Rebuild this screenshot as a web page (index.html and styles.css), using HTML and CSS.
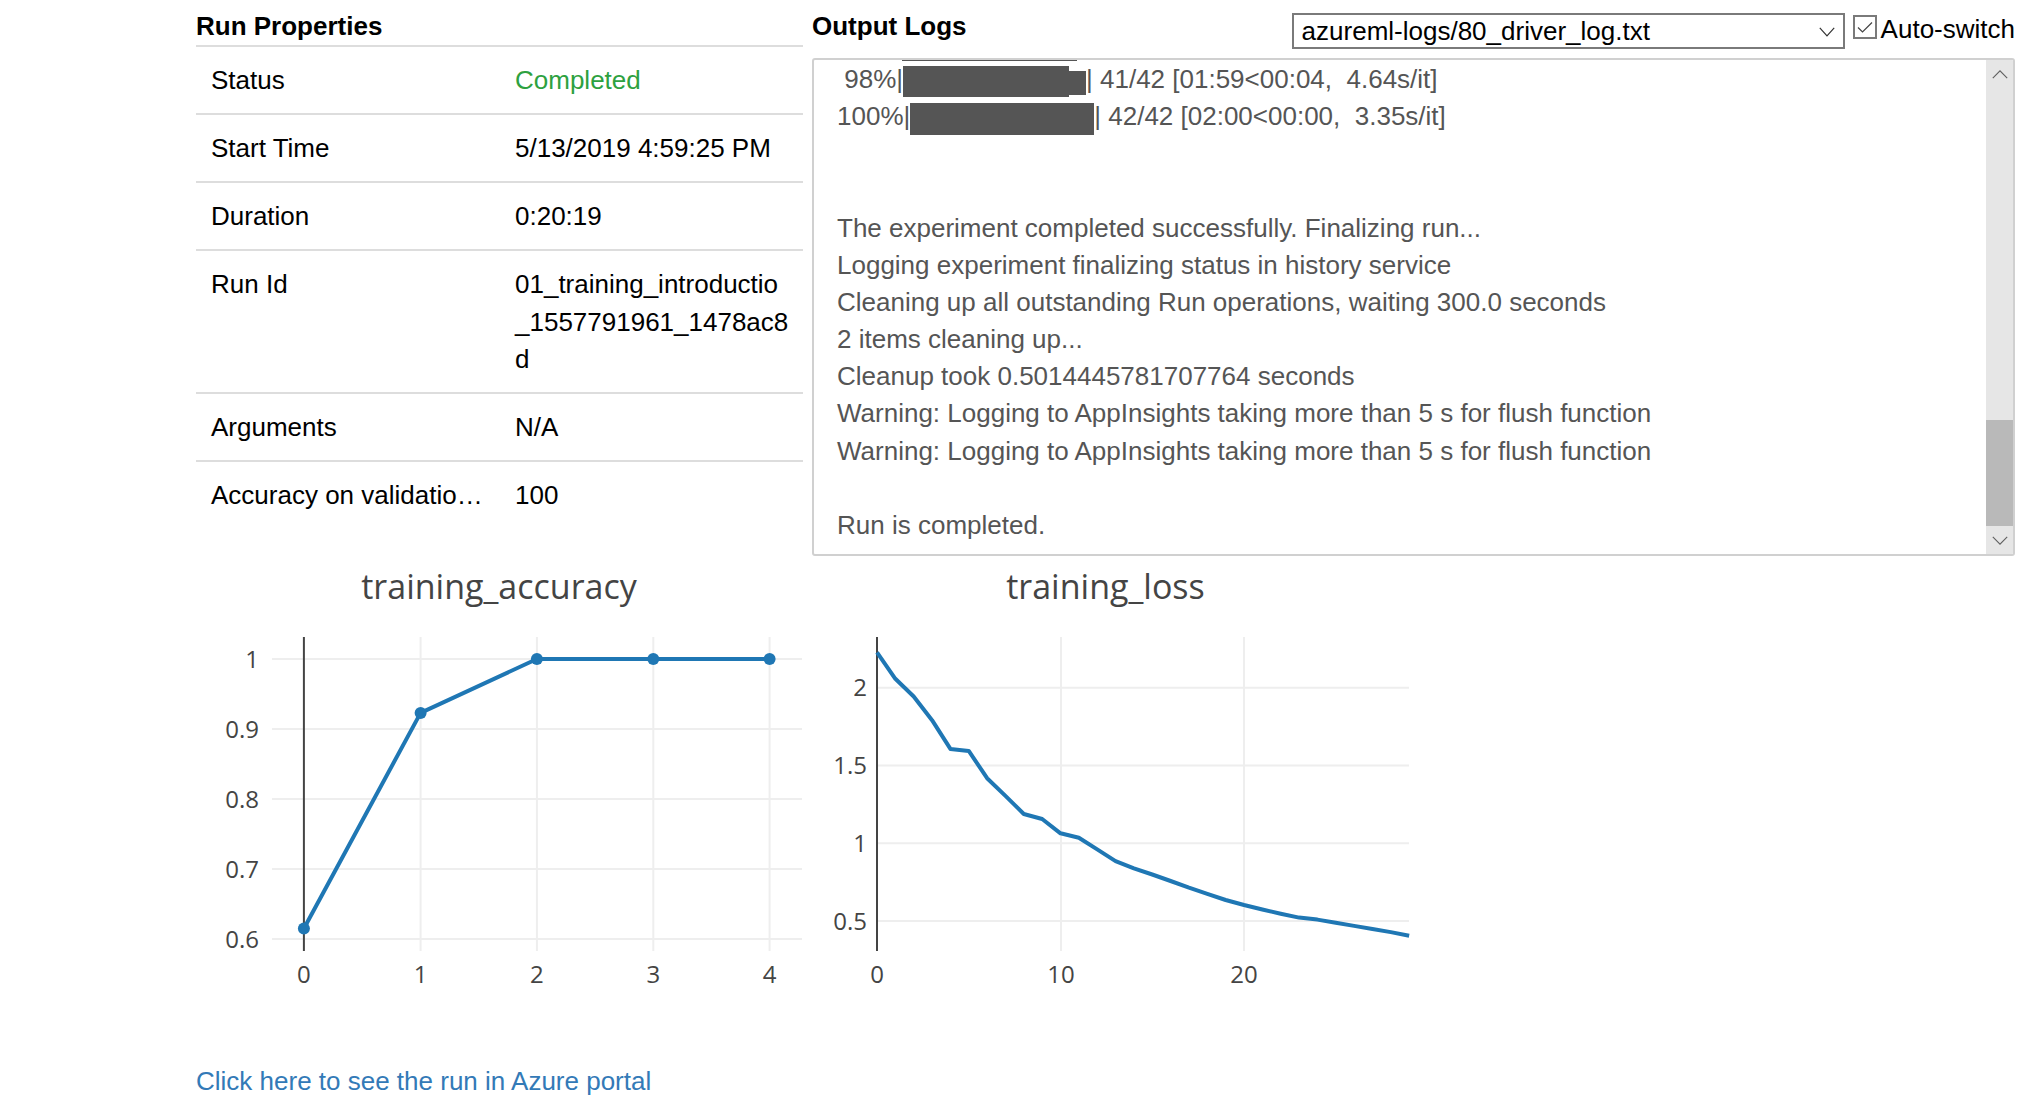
FILE: index.html
```html
<!DOCTYPE html>
<html lang="en">
<head>
<meta charset="utf-8">
<title>Run Details</title>
<link rel="stylesheet" href="styles.css">
</head>
<body>
<div class="page">
  <div class="top">
    <section class="props">
      <h2 class="heading">Run Properties</h2>
      <div class="table">
        <div class="row"><div class="k">Status</div><div class="v ok">Completed</div></div>
        <div class="row"><div class="k">Start Time</div><div class="v">5/13/2019 4:59:25 PM</div></div>
        <div class="row"><div class="k">Duration</div><div class="v">0:20:19</div></div>
        <div class="row"><div class="k">Run Id</div><div class="v">01_training_introductio_1557791961_1478ac8d</div></div>
        <div class="row"><div class="k">Arguments</div><div class="v">N/A</div></div>
        <div class="row"><div class="k">Accuracy on validation accuracy</div><div class="v">100</div></div>
      </div>
    </section>
    <section class="logs">
      <div class="logs-head">
        <h2 class="heading">Output Logs</h2>
        <div class="controls">
          <div class="dropdown">
            <span class="dd-text">azureml-logs/80_driver_log.txt</span>
            <svg class="dd-chev" width="16" height="10" viewBox="0 0 16 10"><polyline points="0.8,0.8 8,8.8 15.2,0.8" fill="none" stroke="#333" stroke-width="1.2"/></svg>
          </div>
          <div class="auto">
            <svg class="cb" width="24" height="24" viewBox="0 0 24 24"><rect x="1" y="1" width="22" height="22" fill="#fff" stroke="#7a7a7a" stroke-width="2"/><polyline points="5,12.5 9.5,17 19,7.5" fill="none" stroke="#444" stroke-width="1.2"/></svg>
            <span class="auto-label">Auto-switch</span>
          </div>
        </div>
      </div>
      <div class="logbox">
        <div class="logtext">
          <div class="peek"></div>
          <div class="ln"> 98%|<span class="bar b95"></span><span class="bar part"></span>| 41/42 [01:59&lt;00:04,  4.64s/it]</div>
          <div class="ln">100%|<span class="bar b100"></span>| 42/42 [02:00&lt;00:00,  3.35s/it]</div>
          <div class="ln blank"></div>
          <div class="ln blank"></div>
          <div class="ln">The experiment completed successfully. Finalizing run...</div>
          <div class="ln">Logging experiment finalizing status in history service</div>
          <div class="ln">Cleaning up all outstanding Run operations, waiting 300.0 seconds</div>
          <div class="ln">2 items cleaning up...</div>
          <div class="ln">Cleanup took 0.5014445781707764 seconds</div>
          <div class="ln">Warning: Logging to AppInsights taking more than 5 s for flush function</div>
          <div class="ln">Warning: Logging to AppInsights taking more than 5 s for flush function</div>
          <div class="ln blank"></div>
          <div class="ln">Run is completed.</div>
        </div>
        <div class="sb">
          <div class="sb-btn"><svg width="16" height="9" viewBox="0 0 16 9"><polyline points="0.8,8.2 8,0.8 15.2,8.2" fill="none" stroke="#606060" stroke-width="1.1"/></svg></div>
          <div class="sb-track"><div class="sb-thumb"></div></div>
          <div class="sb-btn"><svg width="16" height="9" viewBox="0 0 16 9"><polyline points="0.8,0.8 8,8.2 15.2,0.8" fill="none" stroke="#606060" stroke-width="1.1"/></svg></div>
        </div>
      </div>
    </section>
  </div>

  <div class="charts">
    <svg class="chart" width="616" height="470" viewBox="0 0 616 470">
      <text class="title" x="303" y="43">training_accuracy</text>
      <g class="grid">
        <line x1="76" y1="103" x2="606" y2="103"/>
        <line x1="76" y1="173" x2="606" y2="173"/>
        <line x1="76" y1="243" x2="606" y2="243"/>
        <line x1="76" y1="313" x2="606" y2="313"/>
        <line x1="76" y1="383" x2="606" y2="383"/>
        <line x1="224.6" y1="81" x2="224.6" y2="395"/>
        <line x1="340.9" y1="81" x2="340.9" y2="395"/>
        <line x1="457.3" y1="81" x2="457.3" y2="395"/>
        <line x1="573.6" y1="81" x2="573.6" y2="395"/>
      </g>
      <line class="zero" x1="107.9" y1="81" x2="107.9" y2="395"/>
      <g class="ytick">
        <text x="63" y="111.5">1</text>
        <text x="63" y="181.5">0.9</text>
        <text x="63" y="251.5">0.8</text>
        <text x="63" y="321.5">0.7</text>
        <text x="63" y="391.5">0.6</text>
      </g>
      <g class="xtick">
        <text x="107.9" y="427">0</text>
        <text x="224.6" y="427">1</text>
        <text x="340.9" y="427">2</text>
        <text x="457.3" y="427">3</text>
        <text x="573.6" y="427">4</text>
      </g>
      <polyline class="trace" points="107.9,372.5 224.6,156.9 340.9,103 457.3,103 573.6,103"/>
      <g class="marks">
        <circle cx="107.9" cy="372.5" r="6"/>
        <circle cx="224.6" cy="156.9" r="6"/>
        <circle cx="340.9" cy="103" r="6"/>
        <circle cx="457.3" cy="103" r="6"/>
        <circle cx="573.6" cy="103" r="6"/>
      </g>
    </svg>
    <svg class="chart" width="620" height="470" viewBox="0 0 620 470">
      <text class="title" x="293.5" y="43">training_loss</text>
      <g class="grid">
        <line x1="65" y1="131.7" x2="597" y2="131.7"/>
        <line x1="65" y1="209.5" x2="597" y2="209.5"/>
        <line x1="65" y1="287.3" x2="597" y2="287.3"/>
        <line x1="65" y1="365" x2="597" y2="365"/>
        <line x1="249" y1="81" x2="249" y2="395"/>
        <line x1="432" y1="81" x2="432" y2="395"/>
      </g>
      <line class="zero" x1="65" y1="81" x2="65" y2="395"/>
      <g class="ytick">
        <text x="55" y="140.2">2</text>
        <text x="55" y="218">1.5</text>
        <text x="55" y="295.8">1</text>
        <text x="55" y="373.5">0.5</text>
      </g>
      <g class="xtick">
        <text x="65" y="427">0</text>
        <text x="249" y="427">10</text>
        <text x="432" y="427">20</text>
      </g>
      <polyline class="trace" points="65,96.4 83.35,122.8 101.7,140.5 120.05,164.2 138.4,192.9 156.75,194.9 175.1,222.2 193.45,239.9 211.8,258 230.15,263 248.5,277.3 266.85,281.7 285.2,293.4 303.55,305.1 321.9,312.4 340.25,318.5 358.6,325 376.95,331.7 395.3,337.9 413.65,344 432,349 450.35,353.5 468.7,357.7 487.05,361.6 505.4,363.6 523.75,366.8 542.1,369.9 560.45,373 578.8,376.1 597.15,379.8"/>
    </svg>
  </div>

  <a class="portal" href="#">Click here to see the run in Azure portal</a>
</div>
</body>
</html>
```
FILE: styles.css
```css
html, body {
  margin: 0;
  padding: 0;
  background: #fff;
}

body {
  font-family: "Liberation Sans", Arial, sans-serif;
  font-size: 26px;
  line-height: 1.42857;
  color: #000;
}

.page {
  padding: 8px 0 0 196px;
}

.top {
  display: flex;
  gap: 9px;
  align-items: flex-start;
}

.heading {
  margin: 0;
  font-size: 26px;
  font-weight: bold;
  line-height: 37px;
}

/* Run properties */
.props {
  width: 607px;
}

.row {
  display: grid;
  grid-template-columns: 319px 288px;
  border-top: 2px solid #dddddd;
}

.k {
  padding: 15px 26px 14px 15px;
  white-space: nowrap;
  overflow: hidden;
  text-overflow: ellipsis;
}

.v {
  padding: 15px 13px 14px 0;
  word-break: break-all;
}

.ok {
  color: #2da140;
}

/* Output logs */
.logs {
  width: 1203px;
}

.logs-head {
  display: flex;
  justify-content: space-between;
  align-items: flex-start;
  height: 50px;
}

.controls {
  display: flex;
  align-items: flex-start;
}

.dropdown {
  width: 553px;
  height: 36px;
  box-sizing: border-box;
  margin-top: 5px;
  border: 2px solid #7a7a7a;
  padding: 0 8px 0 8px;
  display: flex;
  align-items: center;
  justify-content: space-between;
  line-height: normal;
}

.dd-chev {
  display: block;
  margin-top: 1px;
}

.auto {
  display: flex;
  align-items: flex-start;
  margin-left: 8px;
}

.cb {
  display: block;
  margin-top: 7px;
}

.auto-label {
  margin-left: 4px;
  margin-top: 3px;
  line-height: 37px;
}

.logbox {
  height: 498px;
  box-sizing: border-box;
  border: 2px solid #d0d0d0;
  border-radius: 3px;
  display: flex;
  overflow: hidden;
}

.logtext {
  flex: 1;
  min-width: 0;
  overflow: hidden;
  display: flex;
  flex-direction: column;
  justify-content: flex-end;
  padding: 0 0 10px 23px;
  color: #555;
}

/* bottom edge of the previous progress bar, scrolled almost out of view */
.peek {
  flex: none;
  width: 175px;
  height: 1px;
  margin-left: 65px;
  margin-bottom: auto;
  background: #555;
}

.ln {
  flex: none;
  white-space: pre;
  line-height: 37.14px;
}

.ln.blank {
  height: 37.14px;
}

.bar {
  display: inline-block;
  background: #555;
  height: 31px;
  vertical-align: -9px;
}

.bar.b95 {
  width: 166px;
}

.bar.b100 {
  width: 184px;
  height: 32px;
  vertical-align: -10px;
}

.bar.part {
  width: 17px;
  height: 24px;
  vertical-align: -7px;
}

.sb {
  width: 27px;
  flex: none;
  background: #e6e6e6;
  display: flex;
  flex-direction: column;
}

.sb-btn {
  height: 28px;
  display: flex;
  align-items: center;
  justify-content: center;
}

.sb-btn svg {
  display: block;
}

.sb-track {
  flex: 1;
  display: flex;
  flex-direction: column;
  justify-content: flex-end;
}

.sb-thumb {
  height: 106px;
  background: #b9b9b9;
}

/* Charts */
.charts {
  display: flex;
  align-items: flex-start;
}

.chart {
  display: block;
  flex: none;
  font-family: "Open Sans", "DejaVu Sans", sans-serif;
}

.chart .title {
  font-size: 34px;
  fill: #444;
  text-anchor: middle;
}

.chart .grid line {
  stroke: #eeeeee;
  stroke-width: 2;
}

.chart .zero {
  stroke: #444;
  stroke-width: 2;
}

.chart .ytick text {
  font-size: 24px;
  fill: #444;
  text-anchor: end;
}

.chart .xtick text {
  font-size: 24px;
  fill: #444;
  text-anchor: middle;
}

.chart .trace {
  fill: none;
  stroke: #1f77b4;
  stroke-width: 4;
  stroke-linejoin: round;
}

.chart .marks circle {
  fill: #1f77b4;
}

/* Link */
.portal {
  display: inline-block;
  margin-top: 37px;
  color: #337ab7;
  text-decoration: none;
  line-height: 37px;
}
```
